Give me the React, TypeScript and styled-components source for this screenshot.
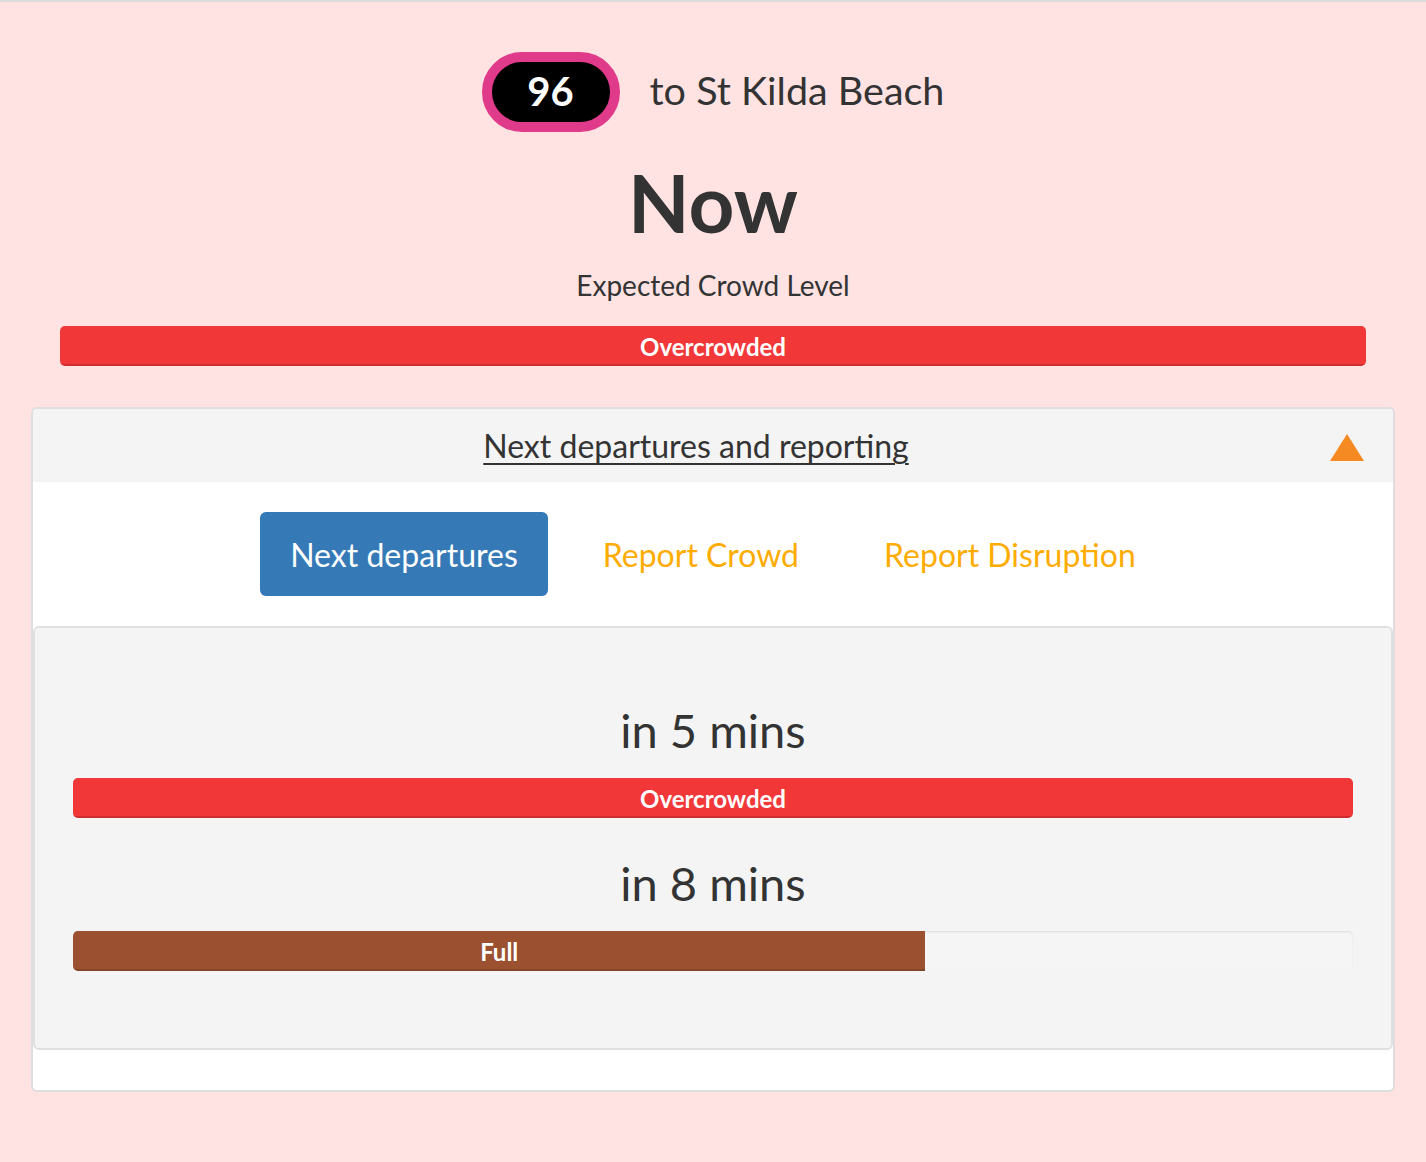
import React from "react";
import styled, { createGlobalStyle } from "styled-components";

const Global = createGlobalStyle`
  html, body { margin: 0; padding: 0; }
  body {
    background: #ffe3e3;
    font-family: Lato, "Open Sans", "Liberation Sans", sans-serif;
    color: #333;
  }
`;

const Page = styled.div`
  border-top: 2px solid #dcdcdc;
  min-height: 1160px;
  display: flex;
  flex-direction: column;
  align-items: center;
  padding: 0 31px;
`;

const RouteRow = styled.div`
  display: flex;
  align-items: center;
  gap: 30px;
  margin-top: 50px;
  height: 80px;
`;

const Badge = styled.div`
  box-sizing: border-box;
  width: 138px;
  height: 80px;
  border: 10px solid #e03a8a;
  border-radius: 40px;
  background: #000;
  color: #fff;
  display: flex;
  align-items: center;
  justify-content: center;
  font-size: 40px;
  font-weight: 700;
  padding-bottom: 2px;
`;

const Destination = styled.div`
  font-size: 39.5px;
  color: #333;
  padding-bottom: 5px;
`;

const Now = styled.h1`
  margin: 30px 0 0;
  font-size: 80px;
  font-weight: 700;
  line-height: 1;
  color: #333;
`;

const Caption = styled.div`
  margin-top: 29px;
  font-size: 28px;
  line-height: 1;
`;

const Track = styled.div<{ $mt: number; $inset?: boolean }>`
  width: 100%;
  height: 40px;
  margin-top: ${(p) => p.$mt}px;
  border-radius: 5px;
  overflow: hidden;
  display: flex;
  background: ${(p) => (p.$inset ? "#f5f5f5" : "transparent")};
  box-shadow: ${(p) => (p.$inset ? "inset 0 1px 2px rgba(0,0,0,0.1)" : "none")};
`;

const Fill = styled.div<{ $color: string }>`
  height: 100%;
  background: ${(p) => p.$color};
  box-shadow: inset 0 -2px 0 rgba(0, 0, 0, 0.15);
  color: #fff;
  font-size: 24px;
  font-weight: 700;
  display: flex;
  align-items: center;
  justify-content: center;
`;

const TopBar = styled.div`
  align-self: stretch;
  padding: 0 29px;
`;

const Card = styled.section`
  align-self: stretch;
  margin-top: 41px;
  border: 2px solid #dedede;
  border-radius: 6px;
  background: #fff;
  overflow: hidden;
`;

const CardHeader = styled.div`
  background: #f4f4f4;
  height: 73px;
  display: flex;
  align-items: center;
  padding: 0 29px 0 31px;
`;

const CardTitle = styled.a`
  flex: 1;
  text-align: center;
  font-size: 32px;
  color: #333;
  text-decoration: underline;
  text-underline-offset: 5px;
  text-decoration-thickness: 2px;
  padding-right: 2px;
`;

const Triangle = styled.span`
  width: 0;
  height: 0;
  border-left: 17px solid transparent;
  border-right: 17px solid transparent;
  border-bottom: 27px solid #f68a22;
  margin-top: 4px;
`;

const CardBody = styled.div`
  padding: 30px 0 40px;
`;

const Tabs = styled.nav`
  display: flex;
  justify-content: center;
  gap: 25px;
`;

const Tab = styled.a<{ $active?: boolean }>`
  height: 84px;
  padding: 0 30px;
  display: flex;
  align-items: center;
  border-radius: 6px;
  font-size: 32px;
  background: ${(p) => (p.$active ? "#357ab7" : "transparent")};
  color: ${(p) => (p.$active ? "#fff" : "#ffac00")};
`;

const Panel = styled.div`
  margin-top: 30px;
  border: 2px solid #e0e0e0;
  border-radius: 6px;
  background: #f4f4f4;
  padding: 79px 38px 77px;
`;

const Departure = styled.div`
  & + & {
    margin-top: 42px;
  }
`;

const When = styled.div`
  text-align: center;
  font-size: 47px;
  line-height: 1;
  color: #333;
`;

const departures = [
  { when: "in 5 mins", label: "Overcrowded", color: "#f23739", pct: 100 },
  { when: "in 8 mins", label: "Full", color: "#9b502f", pct: 66.6 },
];

export default function App() {
  return (
    <>
      <Global />
      <Page>
        <RouteRow>
          <Badge>96</Badge>
          <Destination>to St Kilda Beach</Destination>
        </RouteRow>
        <Now>Now</Now>
        <Caption>Expected Crowd Level</Caption>
        <TopBar>
          <Track $mt={27}>
            <Fill $color="#f23739" style={{ width: "100%" }}>
              Overcrowded
            </Fill>
          </Track>
        </TopBar>
        <Card>
          <CardHeader>
            <CardTitle>Next departures and reporting</CardTitle>
            <Triangle />
          </CardHeader>
          <CardBody>
            <Tabs>
              <Tab $active>Next departures</Tab>
              <Tab>Report Crowd</Tab>
              <Tab>Report Disruption</Tab>
            </Tabs>
            <Panel>
              {departures.map((d) => (
                <Departure key={d.when}>
                  <When>{d.when}</When>
                  <Track $mt={24} $inset={d.pct < 100}>
                    <Fill $color={d.color} style={{ width: `${d.pct}%` }}>
                      {d.label}
                    </Fill>
                  </Track>
                </Departure>
              ))}
            </Panel>
          </CardBody>
        </Card>
      </Page>
    </>
  );
}
